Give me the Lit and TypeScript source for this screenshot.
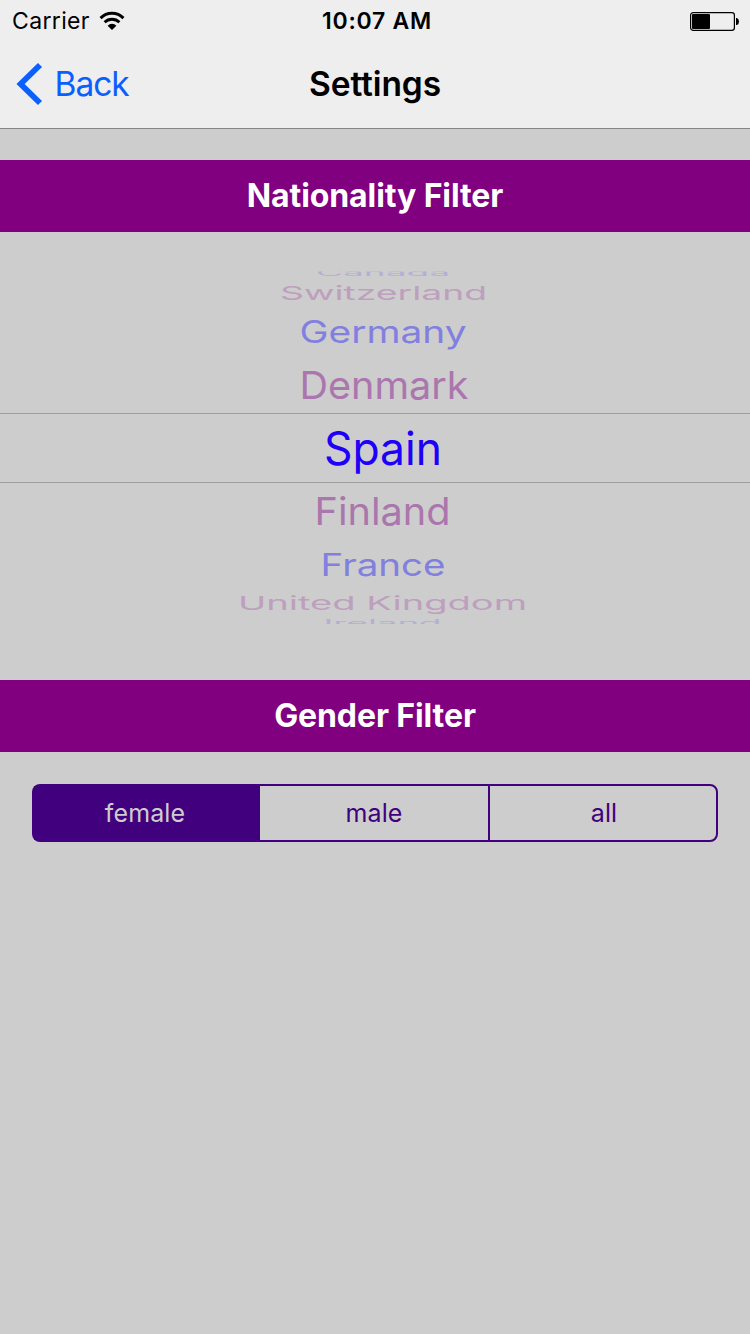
import { LitElement, html, svg, css } from "lit";
import { customElement, property, state } from "lit/decorators.js";

interface WheelRow {
  name: string;
  row: number;
  cap: number;
  center: number;
  width: number;
  tone: string;
  shift?: number;
}

const WHEEL: WheelRow[] = [
  { name: "Canada", row: 14, cap: 6.5, center: 383, width: 134, tone: "far-blue upper", shift: -1 },
  { name: "Switzerland", row: 24, cap: 14, center: 383.5, width: 207, tone: "far-purple" },
  { name: "Germany", row: 52, cap: 22.5, center: 383, width: 167, tone: "blue", shift: 0.5 },
  { name: "Denmark", row: 56, cap: 28, center: 384, width: 169, tone: "purple" },
  { name: "Spain", row: 70, cap: 33.4, center: 383, width: 118, tone: "selected" },
  { name: "Finland", row: 56, cap: 28, center: 382.5, width: 136, tone: "purple" },
  { name: "France", row: 52, cap: 22.5, center: 383, width: 125, tone: "blue" },
  { name: "United Kingdom", row: 24, cap: 13.5, center: 382.5, width: 289, tone: "far-purple", shift: 0.5 },
  { name: "Ireland", row: 14, cap: 6.5, center: 382.5, width: 118, tone: "far-blue lower", shift: 1 },
];

const BASE = 45;
const CAP = BASE * 0.727;

@customElement("status-bar")
class StatusBar extends LitElement {
  static styles = css`
    :host { display: grid; grid-template-columns: 1fr auto 1fr; height: 40px; align-items: center; color: #000; font-size: 23px; line-height: 40px; }
    .left { display: flex; align-items: center; gap: 9.5px; padding-left: 12px; letter-spacing: 0.35px; }
    .left span, .clock { padding-top: 1px; line-height: 41px; }
    .clock { font-weight: 600; letter-spacing: 0.75px; padding-left: 4px; font-size: 23px; }
    .right { display: flex; justify-content: flex-end; padding-right: 10px; }
    svg { display: block; }
  `;
  render() {
    return html`
      <div class="left">
        <span>Carrier</span>
        <svg width="26" height="20" viewBox="0 0 26 20" fill="none" stroke="#000">
          <path d="M1.6 7.1 A16 16 0 0 1 24.4 7.1" stroke-width="3" />
          <path d="M5.6 11.3 A10.5 10.5 0 0 1 20.4 11.3" stroke-width="2.8" />
          <path d="M13 19 L8.6 14.7 A6.2 6.2 0 0 1 17.4 14.7 Z" fill="#000" stroke="none" />
        </svg>
      </div>
      <div class="clock">10:07 AM</div>
      <div class="right">
        <svg width="50" height="20" viewBox="0 0 50 20">
          <rect x="0.6" y="1.6" width="43.8" height="17.8" rx="2.6" fill="none" stroke="#000" stroke-width="1.2" />
          <rect x="2" y="3" width="18" height="15" rx="1" fill="#000" />
          <path d="M46 7 h1 q2 1 2 3.5 t-2 3.5 h-1 z" fill="#000" />
        </svg>
      </div>
    `;
  }
}

@customElement("nav-bar")
class NavBar extends LitElement {
  static styles = css`
    :host { display: grid; grid-template-columns: 1fr auto 1fr; height: 88px; align-items: center; }
    .back { display: flex; align-items: center; gap: 11.5px; padding-left: 16px; color: #0a60ff; font-size: 33.5px; letter-spacing: -1px; }
    .title { font-size: 33.5px; font-weight: 600; color: #000; letter-spacing: -0.1px; }
    svg { display: block; }
  `;
  render() {
    return html`
      <div class="back">
        <svg width="27" height="44" viewBox="0 0 27 44">
          <path d="M24 3 L4.6 22 L24 41" fill="none" stroke="#0a60ff" stroke-width="5.8" />
        </svg>
        <span>Back</span>
      </div>
      <div class="title">Settings</div>
      <div></div>
    `;
  }
}

@customElement("country-wheel")
class CountryWheel extends LitElement {
  static styles = css`
    :host { display: flex; flex-direction: column; justify-content: center; height: 448px; padding-bottom: 16px; box-sizing: border-box; }
    .row { display: block; overflow: visible; }
    .current { border-top: 1px solid #9d9d9d; border-bottom: 1px solid #9d9d9d; box-sizing: border-box; }
    .clip-upper { clip-path: inset(4.5px 0 0 0); }
    .clip-lower { clip-path: inset(0 0 5px 0); }
    .selected { fill: #1e00f8; }
    .purple { fill: #ab76ad; }
    .blue { fill: #8280df; }
    .far-purple { fill: #bd9fbe; }
    .far-blue { fill: #b2b0d4; }
  `;
  render() {
    return html`${WHEEL.map((r) => {
      const current = r.tone === "selected";
      const h = current ? r.row - 2 : r.row;
      const clip = r.tone.includes("upper") ? "clip-upper" : r.tone.includes("lower") ? "clip-lower" : "";
      return html`<div class="${current ? "current" : clip}">
        <svg class="row" width="750" height=${h} viewBox="0 0 750 ${h}">
          ${svg`<text class=${r.tone} font-size=${BASE} text-anchor="middle"
            textLength=${r.width} lengthAdjust="spacingAndGlyphs" y=${CAP / 2}
            transform="translate(${r.center} ${h / 2 + (r.shift ?? 0)}) scale(1 ${r.cap / CAP})">${r.name}</text>`}
        </svg>
      </div>`;
    })}`;
  }
}

@customElement("segmented-control")
class SegmentedControl extends LitElement {
  @property({ attribute: false }) options: string[] = [];
  @state() private active = 0;
  static styles = css`
    :host { display: block; }
    .track { display: grid; grid-template-columns: 228px 228px 230px; height: 58px; }
    .segment { display: flex; align-items: center; justify-content: center; box-sizing: border-box; border: 2px solid #41007e; border-width: 2px 0; color: #41007e; font-size: 25px; letter-spacing: 0.1px; cursor: pointer; }
    .segment:first-child { border-left-width: 2px; border-radius: 8px 0 0 8px; padding-right: 4px; }
    .segment:last-child { border-width: 2px; border-radius: 0 8px 8px 0; padding-left: 2px; }
    .active { background: #41007e; color: #cdcdcd; }
  `;
  render() {
    return html`<div class="track">
      ${this.options.map((o, i) => html`<div class="segment ${i === this.active ? "active" : ""}" @click=${() => (this.active = i)}>${o}</div>`)}
    </div>`;
  }
}

@customElement("app-root")
class AppRoot extends LitElement {
  static styles = css`
    :host { display: flex; flex-direction: column; width: 750px; height: 1334px; overflow: hidden; background: #cdcdcd; font-family: Inter, "Liberation Sans", sans-serif; }
    header { background: #eeeeee; border-bottom: 1px solid #858585; height: 128px; flex: none; }
    .heading { height: 72px; box-sizing: border-box; padding-bottom: 2px; display: flex; align-items: center; justify-content: center; background: #800080; color: #fff; font-size: 32px; font-weight: 700; letter-spacing: -0.1px; }
    .content { padding-top: 31px; }
    .gender { padding: 32px 32px 0; }
  `;
  render() {
    return html`
      <header>
        <status-bar></status-bar>
        <nav-bar></nav-bar>
      </header>
      <div class="content">
        <div class="heading">Nationality Filter</div>
        <country-wheel></country-wheel>
        <div class="heading">Gender Filter</div>
        <div class="gender">
          <segmented-control .options=${["female", "male", "all"]}></segmented-control>
        </div>
      </div>
    `;
  }
}
